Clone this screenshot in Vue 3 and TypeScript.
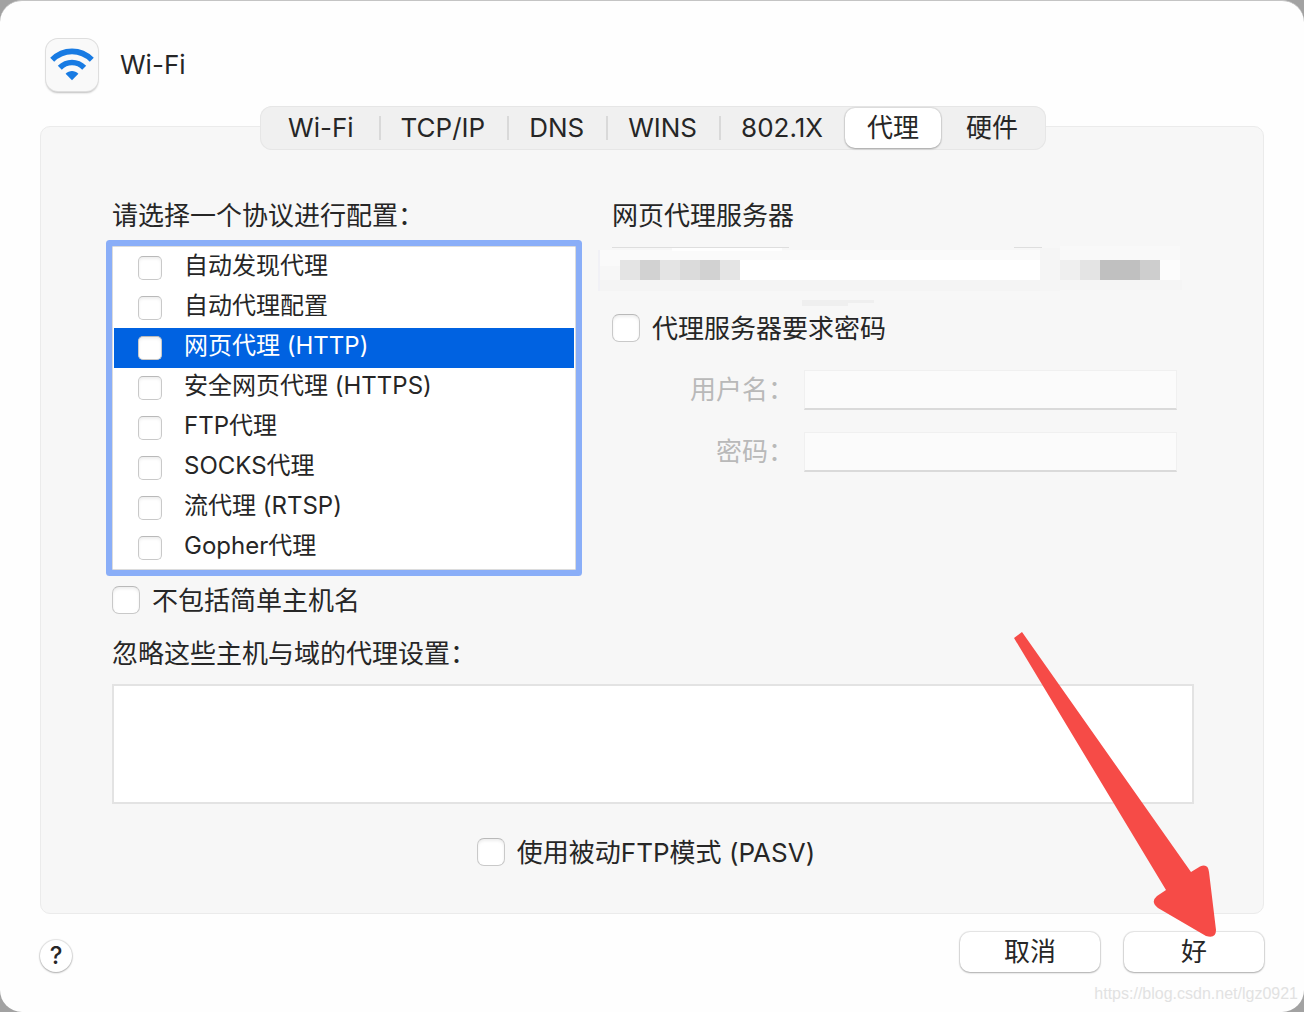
<script setup lang="ts">
import { ref } from 'vue'

interface Protocol {
  id: string
  label: string
  enabled: boolean
}

interface Block {
  x: number
  y: number
  w: number
  h: number
  fill: string
}

const tabs: string[] = ['Wi-Fi', 'TCP/IP', 'DNS', 'WINS', '802.1X', '代理', '硬件']
const activeTab = ref<string>('代理')

const protocols = ref<Protocol[]>([
  { id: 'discovery', label: '自动发现代理', enabled: false },
  { id: 'pac', label: '自动代理配置', enabled: false },
  { id: 'http', label: '网页代理 (HTTP)', enabled: false },
  { id: 'https', label: '安全网页代理 (HTTPS)', enabled: false },
  { id: 'ftp', label: 'FTP代理', enabled: false },
  { id: 'socks', label: 'SOCKS代理', enabled: false },
  { id: 'rtsp', label: '流代理 (RTSP)', enabled: false },
  { id: 'gopher', label: 'Gopher代理', enabled: false },
])
const selected = ref<string>('http')

const needsPassword = ref<boolean>(false)
const username = ref<string>('')
const password = ref<string>('')
const excludeSimple = ref<boolean>(false)
const bypass = ref<string>('')
const passive = ref<boolean>(false)

// Pixelated cover over the server address and port
const mosaic: Block[] = [
  { x: -14, y: 4, w: 2, h: 41, fill: '#f1f1f6' },
  { x: -12, y: 4, w: 440, h: 16, fill: '#fafafa' },
  { x: -12, y: 34, w: 440, h: 11, fill: '#f4f4f4' },
  { x: 0, y: 1, w: 177, h: 1, fill: '#dedede' },
  { x: 60, y: 2, w: 110, h: 3, fill: '#fefefe' },
  { x: 402, y: 1, w: 28, h: 1, fill: '#dedede' },
  { x: 8, y: 14, w: 20, h: 20, fill: '#e4e4e4' },
  { x: 28, y: 14, w: 20, h: 20, fill: '#d2d2d2' },
  { x: 48, y: 14, w: 20, h: 20, fill: '#e4e4e4' },
  { x: 68, y: 14, w: 20, h: 20, fill: '#dbdbdb' },
  { x: 88, y: 14, w: 20, h: 20, fill: '#d2d2d2' },
  { x: 108, y: 14, w: 20, h: 20, fill: '#e5e5e5' },
  { x: 128, y: 14, w: 300, h: 20, fill: '#ffffff' },
  { x: 428, y: 2, w: 20, h: 43, fill: '#f5f5f5' },
  { x: 448, y: 0, w: 120, h: 14, fill: '#f9f9f9' },
  { x: 448, y: 34, w: 122, h: 10, fill: '#f5f5f5' },
  { x: 448, y: 14, w: 20, h: 20, fill: '#efefef' },
  { x: 468, y: 14, w: 20, h: 20, fill: '#e4e4e4' },
  { x: 488, y: 14, w: 40, h: 20, fill: '#c0c0c0' },
  { x: 528, y: 14, w: 20, h: 20, fill: '#cecece' },
  { x: 548, y: 14, w: 20, h: 20, fill: '#fcfcfc' },
  { x: 190, y: 54, w: 72, h: 3, fill: '#efefef' },
  { x: 190, y: 57, w: 46, h: 3, fill: '#efefef' },
]
</script>

<template>
  <main class="window">
    <header class="title-row">
      <span class="app-icon">
        <svg width="52" height="52" viewBox="0 0 52 52" aria-hidden="true">
          <g fill="none" stroke="#187be3" stroke-width="5.600">
            <path d="M6.200 20.800C17.400 9.600 34.600 9.600 45.800 20.800" />
            <path d="M13.800 28.800C20.700 21.800 31.300 21.800 38.200 28.800" />
          </g>
          <path d="M19.600 34.800C23.200 31 28.800 31 32.400 34.800L26 41.200Z" fill="#187be3" />
        </svg>
      </span>
      <h1>Wi-Fi</h1>
    </header>

    <section class="panel">
      <nav class="tabs">
        <button
          v-for="tab in tabs"
          :key="tab"
          type="button"
          class="tab"
          :class="{ active: tab === activeTab }"
          @click="activeTab = tab"
        >
          {{ tab }}
        </button>
      </nav>

      <div class="columns">
        <div class="left">
          <h2>请选择一个协议进行配置：</h2>
          <ul class="protocols">
            <li
              v-for="p in protocols"
              :key="p.id"
              :class="{ selected: p.id === selected }"
              @click="selected = p.id"
            >
              <input :id="p.id" v-model="p.enabled" type="checkbox" class="check small" />
              <label :for="p.id">{{ p.label }}</label>
            </li>
          </ul>
        </div>

        <div class="right">
          <h2>网页代理服务器</h2>
          <svg class="mosaic" aria-hidden="true">
            <rect
              v-for="(b, i) in mosaic"
              :key="i"
              :x="b.x"
              :y="b.y"
              :width="b.w"
              :height="b.h"
              :fill="b.fill"
            />
          </svg>
          <label class="option">
            <input v-model="needsPassword" type="checkbox" class="check" />
            <span>代理服务器要求密码</span>
          </label>
          <div class="fields">
            <label for="username">用户名：</label>
            <input id="username" v-model="username" type="text" :disabled="!needsPassword" />
            <label for="password">密码：</label>
            <input id="password" v-model="password" type="password" :disabled="!needsPassword" />
          </div>
        </div>
      </div>

      <label class="option simple">
        <input v-model="excludeSimple" type="checkbox" class="check" />
        <span>不包括简单主机名</span>
      </label>

      <label class="bypass-label" for="bypass">忽略这些主机与域的代理设置：</label>
      <textarea id="bypass" v-model="bypass"></textarea>

      <label class="option passive">
        <input v-model="passive" type="checkbox" class="check" />
        <span>使用被动FTP模式 (PASV)</span>
      </label>
    </section>

    <footer class="actions">
      <button type="button" class="help" aria-label="帮助">?</button>
      <button type="button" class="push">取消</button>
      <button type="button" class="push">好</button>
    </footer>

    <svg class="arrow" width="204" height="306" viewBox="0 0 204 306" aria-hidden="true">
      <path
        d="M0 6L8 0L177 240L186 234.500Q194 231 195 240L202 298Q202 307 192 304L144 276Q136 270 143 264L152 258Z"
        fill="#f64b47"
      />
    </svg>
    <span class="watermark">https://blog.csdn.net/lgz0921</span>
  </main>
</template>

<style>
body {
  margin: 0;
  background: #a2a2a2;
}
</style>

<style scoped>
.window {
  position: relative;
  box-sizing: border-box;
  min-height: 100vh;
  padding: 38px 40px;
  border-top: 1px solid #c4c4c4;
  border-radius: 22px;
  background: #fefefe;
  color: #262626;
  font-family: Inter, "Noto Sans CJK SC", sans-serif;
  font-size: 26px;
  line-height: 40px;
}

.window *,
.window *::before {
  box-sizing: border-box;
}

button,
input,
textarea {
  margin: 0;
  color: inherit;
  font: inherit;
}

h1,
h2 {
  margin: 0;
  font-size: 26px;
  font-weight: 400;
}

.title-row {
  display: flex;
  align-items: center;
  gap: 22px;
  padding-left: 6px;
}

.app-icon {
  width: 52px;
  height: 52px;
  border-radius: 12px;
  background: #f9f9f9;
  box-shadow: 0 0 0 1px #dedede, 0 2px 2px rgba(0, 0, 0, 0.25);
}

.app-icon svg {
  display: block;
}

.panel {
  display: flex;
  flex-direction: column;
  margin-top: 35px;
  padding: 0 69px 40px 71px;
  border: 1px solid #ebebeb;
  border-radius: 10px;
  background: #f7f7f7;
}

.tabs {
  display: flex;
  align-self: center;
  height: 44px;
  margin-top: -21px;
  padding: 2px 3px;
  border-radius: 12px;
  background: #f0f0f0;
  box-shadow: inset 0 0 0 1px #e6e6e6;
}

.tab {
  position: relative;
  height: 40px;
  padding: 0 22px;
  border: 0;
  border-radius: 10px;
  background: transparent;
  line-height: 38px;
}

.tab:first-child,
.tab:last-child {
  padding: 0 25px;
}

.tab + .tab:not(.active)::before {
  position: absolute;
  top: 8px;
  left: 0;
  width: 2px;
  height: 24px;
  background: #d9d9d9;
  content: "";
}

.tab.active {
  background: #ffffff;
  box-shadow: 0 0 1px 1px rgba(0, 0, 0, 0.08), 0 1px 2px rgba(0, 0, 0, 0.25);
}

.tab.active + .tab::before {
  display: none;
}

.columns {
  display: flex;
  gap: 36px;
  margin-top: 46px;
}

.left {
  flex: 0 1 464px;
}

.right {
  flex: 1;
}

.protocols {
  margin: 10px 0 0;
  padding: 1px;
  border: 1px solid #dcdcdc;
  background: #ffffff;
  box-shadow: 0 0 0 6px #8aaef8;
  border-radius: 1px;
  font-size: 24px;
  list-style: none;
}

.protocols li {
  display: flex;
  gap: 22px;
  height: 40px;
  padding-left: 24px;
}

.protocols label {
  flex: 1;
  line-height: 36px;
}

.protocols .selected {
  background: #0062e1;
  color: #ffffff;
}

.check {
  flex: none;
  width: 28px;
  height: 28px;
  border: 1px solid #c9c9c9;
  border-top-color: #b9b9b9;
  border-radius: 7px;
  background: #ffffff;
  box-shadow: inset 0 2px 3px rgba(0, 0, 0, 0.07);
  appearance: none;
}

.check:checked {
  background: #0062e1;
}

.check.small {
  width: 24px;
  height: 24px;
  margin-top: 8px;
  border-radius: 5px;
}

.mosaic {
  display: block;
  width: 100%;
  height: 60px;
  margin-top: 10px;
  overflow: visible;
}

.option {
  display: flex;
  align-items: center;
  gap: 12px;
}

.option span {
  padding-top: 2px;
}

.right .option {
  margin-top: 1px;
}

.fields {
  display: grid;
  grid-template-columns: 182px 1fr;
  gap: 22px 10px;
  margin: 21px 17px 0 0;
}

.fields label {
  color: #b9b9b9;
  text-align: right;
}

.fields input {
  width: 100%;
  height: 40px;
  padding: 0 8px;
  border: 1px solid #f0f0f0;
  border-bottom: 2px solid #dadada;
  background: #fbfbfb;
}

.simple {
  margin-top: 9px;
}

.bypass-label {
  margin-top: 13px;
}

textarea {
  display: block;
  width: 100%;
  height: 120px;
  margin-top: 10px;
  padding: 4px 8px;
  border: 2px solid #e3e3e3;
  border-radius: 0;
  background: #ffffff;
  resize: none;
}

.passive {
  align-self: center;
  margin: 27px 14px 0 0;
}

.actions {
  display: flex;
  align-items: center;
  gap: 24px;
  margin-top: 18px;
}

.push,
.help {
  border: 0;
  background: #ffffff;
  box-shadow: 0 0 1px 1px rgba(0, 0, 0, 0.1), 0 1px 2px rgba(0, 0, 0, 0.25);
}

.push {
  width: 140px;
  height: 40px;
  padding: 0;
  border-radius: 10px;
  line-height: 38px;
}

.help {
  width: 32px;
  height: 32px;
  margin: 8px auto 0 0;
  padding: 0;
  border-radius: 16px;
  font-size: 24px;
  font-weight: 500;
  line-height: 32px;
}

.arrow {
  position: absolute;
  right: 86px;
  bottom: 74px;
  pointer-events: none;
}

.watermark {
  position: absolute;
  right: 6px;
  bottom: 6px;
  color: #e2e2e2;
  font-family: "Liberation Sans", sans-serif;
  font-size: 16px;
  line-height: 24px;
}
</style>
